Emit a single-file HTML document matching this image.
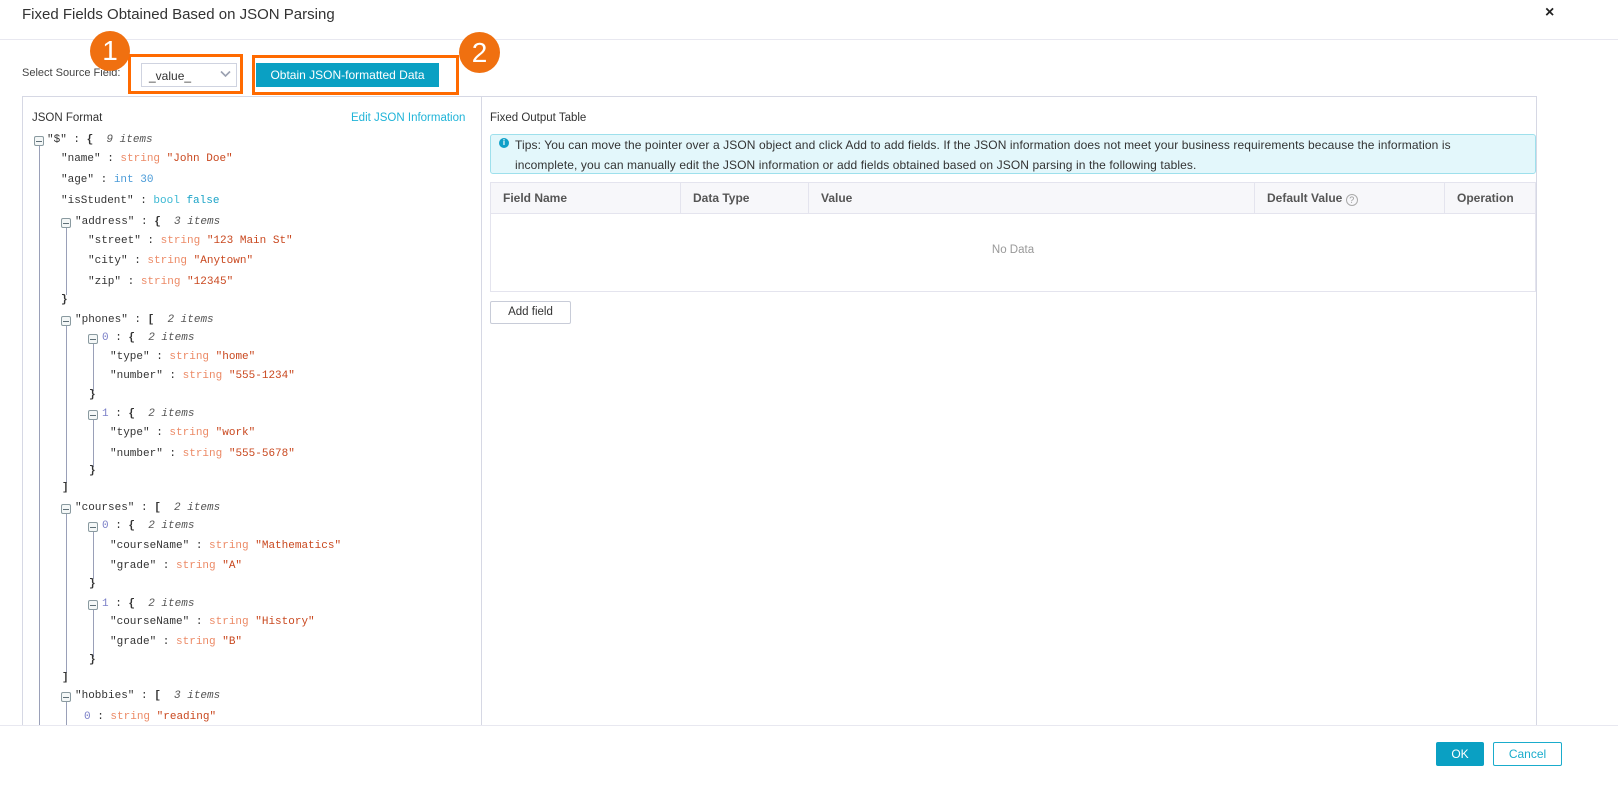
<!DOCTYPE html>
<html><head><meta charset="utf-8"><style>
*{box-sizing:border-box;margin:0;padding:0}
body{width:1618px;height:796px;background:#fff;font-family:"Liberation Sans",sans-serif;position:relative;overflow:hidden;color:#333}
.a{position:absolute}
.l{position:absolute;font-family:"Liberation Mono",monospace;font-size:11px;white-space:pre;line-height:14px;color:#333}
.s{color:#ec8a66}.v{color:#c9481f}.i{color:#4a9bd8}.b{color:#3bb8d3}.v2{color:#1aa3c7}.it{font-style:italic;color:#555}.n{color:#7a7fc8}
.t{position:absolute;width:10px;height:10px;border:1px solid #8a9aa0;border-radius:2px;background:#f4f7f7}
.t:after{content:"";position:absolute;left:1px;right:1px;top:4px;height:1px;background:#607078}
.g{position:absolute;width:1px;background:#9aa0b8}
.th{position:absolute;top:0;height:31px;line-height:31px;font-size:12px;font-weight:bold;color:#555;padding-left:12px;border-right:1px solid #e4e4ee}
</style></head><body>
<div class="a" style="left:22px;top:6px;font-size:15px;color:#333">Fixed Fields Obtained Based on JSON Parsing</div>
<div class="a" style="left:1545px;top:4px;font-size:16px;font-weight:bold;color:#222">×</div>
<div class="a" style="left:0;top:39px;width:1618px;height:1px;background:#e8e8f0"></div>

<div class="a" style="left:22px;top:67px;font-size:11px;color:#444">Select Source Field:</div>
<div class="a" style="left:141px;top:63px;width:96px;height:24px;border:1px solid #cfd3e0;background:#fff;font-size:12px;padding:5px 0 0 7px;color:#333">_value_</div>
<svg class="a" style="left:220px;top:70px" width="11" height="8"><path d="M1 1.5L5.5 6L10 1.5" fill="none" stroke="#9aa0b0" stroke-width="1.6"/></svg>
<div class="a" style="left:128px;top:54px;width:115px;height:40px;border:3px solid #ff6a00"></div>
<div class="a" style="left:90px;top:31px;width:40px;height:40px;border-radius:50%;background:#f07010;color:#fff;font-size:28px;text-align:center;line-height:40px">1</div>
<div class="a" style="left:256px;top:63px;width:183px;height:24px;background:#0aa0c3;color:#fff;font-size:12px;text-align:center;line-height:24px">Obtain JSON-formatted Data</div>
<div class="a" style="left:252px;top:55px;width:207px;height:40px;border:3px solid #ff6a00"></div>
<div class="a" style="left:459px;top:32px;width:41px;height:41px;border-radius:50%;background:#f07010;color:#fff;font-size:28px;text-align:center;line-height:41px">2</div>

<div class="a" style="left:22px;top:96px;width:1515px;height:640px;border:1px solid #d6d8e4"></div>
<div class="a" style="left:481px;top:96px;width:1px;height:630px;background:#d6d8e4"></div>

<div class="a" style="left:32px;top:112px;font-size:11.5px;color:#333">JSON Format</div>
<div class="a" style="left:351px;top:112px;font-size:11.5px;color:#20b4d8">Edit JSON Information</div>

<div class="g" style="left:39px;top:145px;height:585px"></div>
<div class="g" style="left:66px;top:227px;height:68px"></div>
<div class="g" style="left:66px;top:325px;height:158px"></div>
<div class="g" style="left:93px;top:343px;height:48px"></div>
<div class="g" style="left:93px;top:419px;height:48px"></div>
<div class="g" style="left:66px;top:513px;height:160px"></div>
<div class="g" style="left:93px;top:531px;height:48px"></div>
<div class="g" style="left:93px;top:609px;height:48px"></div>
<div class="g" style="left:66px;top:701px;height:30px"></div>

<div class="t" style="left:34px;top:136px"></div>
<div class="l" style="left:47px;top:133px">"$" : <b>{</b>  <span class="it">9 items</span></div>
<div class="l" style="left:61px;top:152px">"name" : <span class="s">string</span> <span class="v">"John Doe"</span></div>
<div class="l" style="left:61px;top:173px">"age" : <span class="i">int</span> <span class="i">30</span></div>
<div class="l" style="left:61px;top:194px">"isStudent" : <span class="b">bool</span> <span class="v2">false</span></div>
<div class="t" style="left:61px;top:218px"></div>
<div class="l" style="left:75px;top:215px">"address" : <b>{</b>  <span class="it">3 items</span></div>
<div class="l" style="left:88px;top:234px">"street" : <span class="s">string</span> <span class="v">"123 Main St"</span></div>
<div class="l" style="left:88px;top:254px">"city" : <span class="s">string</span> <span class="v">"Anytown"</span></div>
<div class="l" style="left:88px;top:275px">"zip" : <span class="s">string</span> <span class="v">"12345"</span></div>
<div class="l" style="left:61px;top:293px"><b>}</b></div>
<div class="t" style="left:61px;top:316px"></div>
<div class="l" style="left:75px;top:313px">"phones" : <b>[</b>  <span class="it">2 items</span></div>
<div class="t" style="left:88px;top:334px"></div>
<div class="l" style="left:102px;top:331px"><span class="n">0</span> : <b>{</b>  <span class="it">2 items</span></div>
<div class="l" style="left:110px;top:350px">"type" : <span class="s">string</span> <span class="v">"home"</span></div>
<div class="l" style="left:110px;top:369px">"number" : <span class="s">string</span> <span class="v">"555-1234"</span></div>
<div class="l" style="left:89px;top:388px"><b>}</b></div>
<div class="t" style="left:88px;top:410px"></div>
<div class="l" style="left:102px;top:407px"><span class="n">1</span> : <b>{</b>  <span class="it">2 items</span></div>
<div class="l" style="left:110px;top:426px">"type" : <span class="s">string</span> <span class="v">"work"</span></div>
<div class="l" style="left:110px;top:447px">"number" : <span class="s">string</span> <span class="v">"555-5678"</span></div>
<div class="l" style="left:89px;top:464px"><b>}</b></div>
<div class="l" style="left:62px;top:481px"><b>]</b></div>
<div class="t" style="left:61px;top:504px"></div>
<div class="l" style="left:75px;top:501px">"courses" : <b>[</b>  <span class="it">2 items</span></div>
<div class="t" style="left:88px;top:522px"></div>
<div class="l" style="left:102px;top:519px"><span class="n">0</span> : <b>{</b>  <span class="it">2 items</span></div>
<div class="l" style="left:110px;top:539px">"courseName" : <span class="s">string</span> <span class="v">"Mathematics"</span></div>
<div class="l" style="left:110px;top:559px">"grade" : <span class="s">string</span> <span class="v">"A"</span></div>
<div class="l" style="left:89px;top:577px"><b>}</b></div>
<div class="t" style="left:88px;top:600px"></div>
<div class="l" style="left:102px;top:597px"><span class="n">1</span> : <b>{</b>  <span class="it">2 items</span></div>
<div class="l" style="left:110px;top:615px">"courseName" : <span class="s">string</span> <span class="v">"History"</span></div>
<div class="l" style="left:110px;top:635px">"grade" : <span class="s">string</span> <span class="v">"B"</span></div>
<div class="l" style="left:89px;top:653px"><b>}</b></div>
<div class="l" style="left:62px;top:671px"><b>]</b></div>
<div class="t" style="left:61px;top:692px"></div>
<div class="l" style="left:75px;top:689px">"hobbies" : <b>[</b>  <span class="it">3 items</span></div>
<div class="l" style="left:84px;top:710px"><span class="n">0</span> : <span class="s">string</span> <span class="v">"reading"</span></div>

<div class="a" style="left:490px;top:112px;font-size:11.5px;color:#333">Fixed Output Table</div>
<div class="a" style="left:490px;top:134px;width:1046px;height:40px;background:#e3f7fb;border:1px solid #9ee0ec;border-radius:3px"></div>
<div class="a" style="left:499px;top:138px;width:10px;height:10px;border-radius:50%;background:#10a0c8;color:#fff;font-size:8px;font-weight:bold;text-align:center;line-height:10px">i</div>
<div class="a" style="left:515px;top:135px;width:965px;font-size:12px;letter-spacing:0.1px;line-height:20px;color:#333">Tips: You can move the pointer over a JSON object and click Add to add fields. If the JSON information does not meet your business requirements because the information is incomplete, you can manually edit the JSON information or add fields obtained based on JSON parsing in the following tables.</div>

<div class="a" style="left:490px;top:182px;width:1046px;height:110px;border:1px solid #e4e4ee">
 <div class="a" style="left:0;top:0;width:1044px;height:31px;background:#f7f7fa;border-bottom:1px solid #e4e4ee"></div>
 <div class="th" style="left:0;width:190px">Field Name</div>
 <div class="th" style="left:190px;width:128px">Data Type</div>
 <div class="th" style="left:318px;width:446px">Value</div>
 <div class="th" style="left:764px;width:190px">Default Value <span style="display:inline-block;width:12px;height:12px;border:1px solid #aaa;border-radius:50%;font-size:9px;line-height:10px;text-align:center;color:#999;font-weight:normal;vertical-align:-1px">?</span></div>
 <div class="th" style="left:954px;width:90px;border-right:none">Operation</div>
 <div class="a" style="left:0;top:61px;width:1044px;text-align:center;font-size:11.5px;color:#999">No Data</div>
</div>
<div class="a" style="left:490px;top:301px;width:81px;height:23px;border:1px solid #c8ccd8;border-radius:2px;font-size:11.5px;text-align:center;line-height:21px;color:#333">Add field</div>

<div class="a" style="left:0;top:725px;width:1618px;height:71px;background:#fff;border-top:1px solid #e8e8f0"></div>
<div class="a" style="left:1436px;top:742px;width:48px;height:24px;background:#0aa0c3;border-radius:2px;color:#fff;font-size:12px;text-align:center;line-height:24px">OK</div>
<div class="a" style="left:1493px;top:742px;width:69px;height:24px;border:1px solid #1aaccc;border-radius:2px;color:#1aaccc;font-size:12px;text-align:center;line-height:22px">Cancel</div>
</body></html>
